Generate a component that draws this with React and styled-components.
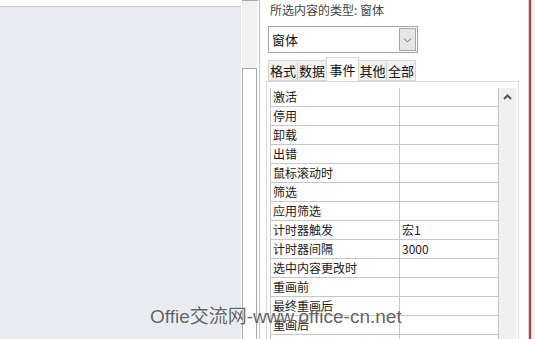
import React from 'react';
import styled, { createGlobalStyle } from 'styled-components';

const GlobalStyle = createGlobalStyle`
    html, body {
        margin: 0;
        padding: 0;
        background: #ffffff;
    }
    body {
        font-family: 'Noto Sans CJK SC', 'Liberation Sans', sans-serif;
    }
`;

const Screen = styled.div`
    position: relative;
    display: flex;
    width: 535px;
    height: 339px;
    overflow: hidden;
    background: #ffffff;
`;

const Workspace = styled.div`
    display: flex;
    flex-direction: column;
    width: 241px;
    border-right: 1px solid #ffffff;
`;

const WorkspaceTop = styled.div`
    height: 6px;
    background: #ffffff;
    border-bottom: 1px solid #c8c8c8;
`;

const WorkspaceBody = styled.div`
    flex: 1;
    background: #e8ebf0;
`;

const SideStrip = styled.div`
    display: flex;
    flex-direction: column;
    width: 15px;
    background: #f1f1f1;
    border-top: 1px solid #a8a8a8;
    border-right: 2px solid #ffffff;
`;

const StripBox = styled.div`
    flex: 1;
    margin-top: 67px;
    background: #ffffff;
    border: 1px solid #a8a8a8;
    border-bottom: none;
`;

const Sheet = styled.div`
    display: flex;
    flex-direction: column;
    width: 270px;
    height: 339px;
    border-left: 1px solid #c4c4c4;
    border-right: 1px solid #d8d8d8;
    padding: 0 0 0 7px;
    box-sizing: border-box;
    overflow: hidden;
    & > * {
        flex-shrink: 0;
    }
`;

const SheetTitle = styled.div`
    height: 26px;
    padding: 1px 0 0 3px;
    box-sizing: border-box;
    font-size: 12px;
    line-height: 18px;
    color: #444444;
`;

const Combo = styled.div`
    display: flex;
    align-items: center;
    justify-content: space-between;
    width: 150px;
    height: 27px;
    margin-left: 1px;
    padding: 0 1px 0 3px;
    box-sizing: border-box;
    border: 1px solid #a3a3a3;
    font-size: 13px;
    color: #111111;
`;

const ComboButton = styled.div`
    display: flex;
    align-items: center;
    justify-content: center;
    width: 17px;
    height: 23px;
    box-sizing: border-box;
    background: #e6e6e6;
    border: 1px solid #a6a6a6;
`;

const Tabs = styled.div`
    display: flex;
    align-items: flex-end;
    height: 28px;
    margin-left: 1px;
    box-sizing: border-box;
`;

const Tab = styled.div`
    display: flex;
    align-items: center;
    justify-content: center;
    width: ${p => p.$w}px;
    height: ${p => (p.$active ? 24 : 21)}px;
    box-sizing: border-box;
    background: ${p => (p.$active ? '#ffffff' : '#f0f0f0')};
    border: 1px solid #d6d6d6;
    border-bottom: ${p => (p.$active ? 'none' : '1px solid #d6d6d6')};
    margin-left: ${p => (p.$first ? 0 : -1)}px;
    font-size: 13px;
    color: #111111;
`;

const GridFrame = styled.div`
    flex: 1 0 auto;
    display: flex;
    width: 253px;
    margin-left: -1px;
    padding: 6px 2px 0 3px;
    box-sizing: border-box;
    border: 1px solid #d8d8d8;
    border-bottom: none;
`;

const Grid = styled.div`
    width: 229px;
    display: flex;
    flex-direction: column;
    border-left: 1px solid #c6c6c6;
`;

const Row = styled.div`
    display: grid;
    grid-template-columns: 129px 98px;
    height: 19px;
    flex-shrink: 0;
    box-sizing: border-box;
    border-bottom: 1px solid #c6c6c6;
    border-right: 1px solid #c6c6c6;
    font-size: 12px;
    line-height: 18px;
    color: #1a1a1a;
`;

const Cell = styled.div`
    padding-left: 2px;
    white-space: nowrap;
    overflow: hidden;
    border-right: ${p => (p.$label ? '1px solid #c6c6c6' : 'none')};
`;

const ScrollTrack = styled.div`
    width: 18px;
    display: flex;
    justify-content: center;
    padding-top: 6px;
    box-sizing: border-box;
    background: #f0f0f0;
`;

const RedEdge = styled.div`
    width: 2px;
    background: #d0383c;
`;

const Offscreen = styled.div`
    flex: 1;
    background: #f4f4f4;
    border-left: 1px solid #e0e0e0;
`;

const Watermark = styled.div`
    position: absolute;
    left: 150px;
    top: 303px;
    font-family: 'Liberation Sans', 'Noto Sans CJK SC', sans-serif;
    font-size: 19px;
    line-height: 28px;
    color: rgba(70, 70, 70, 0.85);
    white-space: nowrap;
    text-shadow: 0 0 2px rgba(255, 255, 255, 0.9);
    pointer-events: none;
`;

const Chevron = ({ up }) => (
    <svg width="9" height="6" viewBox="0 0 9 6">
        <path
            d={up ? 'M1 5 L4.5 1.5 L8 5' : 'M1 1.5 L4.5 5 L8 1.5'}
            fill="none"
            stroke={up ? '#555' : '#666'}
            strokeWidth={up ? 2 : 1}
        />
    </svg>
);

const tabs = [
    { name: '格式', w: 30 },
    { name: '数据', w: 30 },
    { name: '事件', w: 33, active: true },
    { name: '其他', w: 29 },
    { name: '全部', w: 30 },
];

const events = [
    ['激活', ''],
    ['停用', ''],
    ['卸载', ''],
    ['出错', ''],
    ['鼠标滚动时', ''],
    ['筛选', ''],
    ['应用筛选', ''],
    ['计时器触发', '宏1'],
    ['计时器间隔', '3000'],
    ['选中内容更改时', ''],
    ['重画前', ''],
    ['最终重画后', ''],
    ['重画后', ''],
    ['', ''],
];

const App = () => (
    <Screen>
        <GlobalStyle />
        <Workspace>
            <WorkspaceTop />
            <WorkspaceBody />
        </Workspace>
        <SideStrip>
            <StripBox />
        </SideStrip>
        <Sheet>
            <SheetTitle>所选内容的类型: 窗体</SheetTitle>
            <Combo>
                窗体
                <ComboButton>
                    <Chevron />
                </ComboButton>
            </Combo>
            <Tabs>
                {tabs.map((t, i) => (
                    <Tab key={t.name} $w={t.w} $active={t.active} $first={i === 0}>
                        {t.name}
                    </Tab>
                ))}
            </Tabs>
            <GridFrame>
                <Grid>
                    {events.map(([label, value], i) => (
                        <Row key={i}>
                            <Cell $label>{label}</Cell>
                            <Cell>{value}</Cell>
                        </Row>
                    ))}
                </Grid>
                <ScrollTrack>
                    <Chevron up />
                </ScrollTrack>
            </GridFrame>
        </Sheet>
        <RedEdge />
        <Offscreen />
        <Watermark>Offie交流网-www.office-cn.net</Watermark>
    </Screen>
);

export default App;
